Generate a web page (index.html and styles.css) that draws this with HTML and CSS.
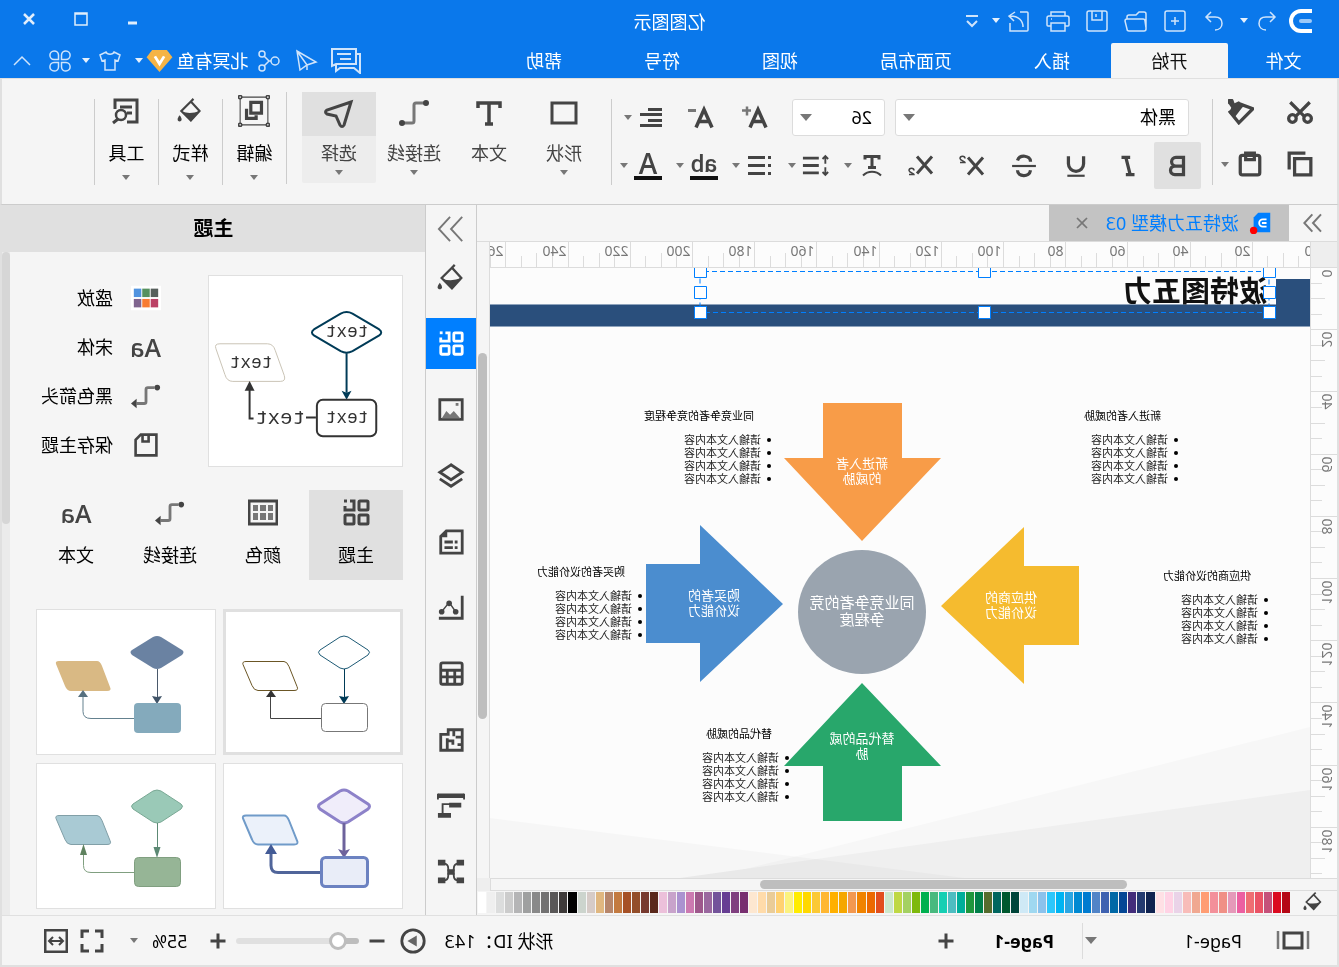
FILE: index.html
```html
<!DOCTYPE html>
<html lang="zh-CN">
<head>
<meta charset="utf-8">
<title>亿图图示</title>
<link rel="stylesheet" href="styles.css">
</head>
<body>
<svg class="sprite" aria-hidden="true">
  <symbol id="i-logo" viewBox="0 0 24 24"><path d="M1 2H12A10 10 0 0 1 12 22H1" stroke="#fff" stroke-width="4"/><path d="M3 12H12" stroke="#9dc9f8" stroke-width="4" stroke-linecap="round"/></symbol>
  <symbol id="i-undo" viewBox="0 0 24 24"><path d="M9 3 4 8l5 5M4 8h9c5 0 7 3 7 6.500s-2.500 6.500-7 6.500"/></symbol>
  <symbol id="i-redo" viewBox="0 0 24 24"><path d="m15 3 5 5-5 5M20 8h-9c-5 0-7 3-7 6.500S6.500 21 11 21"/></symbol>
  <symbol id="i-new" viewBox="0 0 24 24"><rect x="2" y="2" width="20" height="20" rx="2"/><path d="M12 8v8M8 12h8"/></symbol>
  <symbol id="i-open" viewBox="0 0 24 24"><path d="M2 20V5a2 2 0 0 1 2-2h5l3 3h7a2 2 0 0 1 2 2v2M2 19l1-7a2 2 0 0 1 2-2h16a2 2 0 0 1 2 2l-2 8a2 2 0 0 1-2 2H4a2 2 0 0 1-2-2"/></symbol>
  <symbol id="i-save" viewBox="0 0 24 24"><path d="M2 4a2 2 0 0 1 2-2h16a2 2 0 0 1 2 2v16a2 2 0 0 1-2 2H4a2 2 0 0 1-2-2ZM7 2v9h10V2M13 5v3"/></symbol>
  <symbol id="i-print" viewBox="0 0 24 24"><path d="M5 7V3h14v4M5 17H2a1 1 0 0 1-1-1V9a2 2 0 0 1 2-2h18a2 2 0 0 1 2 2v7a1 1 0 0 1-1 1h-3M5 14h14v8H5zM18 10h1"/></symbol>
  <symbol id="i-export" viewBox="0 0 24 24"><path d="M11 3H4a1 1 0 0 0-1 1v17a1 1 0 0 0 1 1h17v-8M8 18c0-6 4-11 13-11M16 3l6 4-5 5"/></symbol>
  <symbol id="i-more" viewBox="0 0 24 24"><path d="M6 7h12M7 12l5 5 5-5" stroke-width="2"/></symbol>
  <symbol id="i-chat" viewBox="0 0 30 26"><path d="M5 1h24v17l-4-2H5ZM5 6H1v19l6-5h14l4 3v-6M10 6h14M10 11h11" stroke-width="2"/></symbol>
  <symbol id="i-send" viewBox="0 0 24 24"><path d="m22 2-3 19-7-5-9-3ZM22 2 12 16v5"/></symbol>
  <symbol id="i-share" viewBox="0 0 24 24"><circle cx="6" cy="12" r="4"/><circle cx="19" cy="5" r="3"/><circle cx="19" cy="19" r="3"/><path d="M10 12h2l5-5M12 12l5 5"/></symbol>
  <symbol id="i-vip" viewBox="0 0 28 26"><path d="M6 1h16l6 8-14 16L0 9Z" fill="#f5b446" stroke="none"/><path d="m9 8 5 8 5-8" stroke="#fff" stroke-width="3"/></symbol>
  <symbol id="i-shirt" viewBox="0 0 24 24"><path d="M8 3 2 6l2 6 3-1v10h10V11l3 1 2-6-6-3c-1 3-7 3-8 0Z"/></symbol>
  <symbol id="i-clover" viewBox="0 0 24 24"><path d="M10.500 10.500V6A4.300 4.300 0 1 0 6 10.500ZM13.500 10.500V6A4.300 4.300 0 1 1 18 10.500ZM10.500 13.500V18A4.300 4.300 0 1 1 6 13.500ZM13.500 13.500V18A4.300 4.300 0 1 0 18 13.500Z"/></symbol>
  <symbol id="i-up" viewBox="0 0 24 24"><path d="m4 16 8-8 8 8"/></symbol>
  <symbol id="i-min" viewBox="0 0 24 24"><path d="M8 16h9" stroke-width="3"/></symbol>
  <symbol id="i-max" viewBox="0 0 24 24"><path d="M6 6h12v12H6zM6 7h12" stroke-width="1.500"/></symbol>
  <symbol id="i-close" viewBox="0 0 24 24"><path d="m6 6 12 12M18 6 6 18"/></symbol>
  <symbol id="i-winclose" viewBox="0 0 24 24"><path d="m7 7 10 10M17 7 7 17" stroke-width="2.500"/></symbol>
  <symbol id="i-cut" viewBox="0 0 24 24"><circle cx="5" cy="18" r="3.500"/><circle cx="19" cy="18" r="3.500"/><path d="M3 3 16 16M21 3 8 16"/></symbol>
  <symbol id="i-copy" viewBox="0 0 24 24"><path d="M2 7h15v15H2z" stroke-width="3"/><path d="M7 2h15v15"/></symbol>
  <symbol id="i-painter" viewBox="0 0 24 24"><path d="M1 9 12 5l10 7-8 10Z"/><path d="m9 6 5-4 4 2 1-3a3 3 0 1 1 4 4l-2 3 2 5-5 4-7-9Z" fill="currentColor" stroke="none"/></symbol>
  <symbol id="i-paste" viewBox="0 0 24 24"><rect x="3" y="4" width="18" height="18" rx="2"/><path d="M8 2h8v6H8z"/></symbol>
  <symbol id="i-bold" viewBox="0 0 24 24"><path d="M6 4h7a4 4 0 0 1 0 8H6Zm0 8h8a4 4 0 0 1 0 8H6Z" stroke-width="3"/></symbol>
  <symbol id="i-italic" viewBox="0 0 24 24"><path d="M10 4h8M6 20h8M14 4l-4 16" stroke-width="3"/></symbol>
  <symbol id="i-under" viewBox="0 0 24 24"><path d="M5 3v7a7 7 0 0 0 14 0V3" stroke-width="3"/><path d="M4 21h16" stroke-width="2"/></symbol>
  <symbol id="i-strike" viewBox="0 0 24 24"><path d="M18 7c-2-6-12-5-12 1M6 16c1 7 12 6 12 0" stroke-width="3"/><path d="M1 12h22" stroke-width="2"/></symbol>
  <symbol id="i-sup" viewBox="0 0 28 24"><path d="m3 4 15 17M18 4 3 21" stroke-width="3"/><path d="M21 5c0-3 5-3 5 0 0 2-5 3-5 4h5" stroke-width="1.500"/></symbol>
  <symbol id="i-sub" viewBox="0 0 28 24"><path d="m2 3 15 17M17 3 2 20" stroke-width="3"/><path d="M20 17c0-3 5-3 5 0 0 2-5 3-5 4h5" stroke-width="1.500"/></symbol>
  <symbol id="i-aplus" viewBox="0 0 28 24"><path d="M3 22 11 4l8 18M5 16h12" stroke-width="3.500"/><path d="M18 5h9M22 1v9" stroke="#777" stroke-width="2.500"/></symbol>
  <symbol id="i-aminus" viewBox="0 0 28 24"><path d="M3 22 11 4l8 18M5 16h12" stroke-width="3.500"/><path d="M19 5h8" stroke="#777" stroke-width="3"/></symbol>
  <symbol id="i-align" viewBox="0 0 28 24"><path d="M4 4h14M4 9h22M4 15h14M4 20h22" stroke-width="3"/></symbol>
  <symbol id="i-textfx" viewBox="0 0 28 24"><path d="M7 6V3h14v3M14 3v11M10 14h8" stroke-width="3"/><path d="M5 22c5-5 13-5 18 0" stroke-width="2"/></symbol>
  <symbol id="i-spacing" viewBox="0 0 30 24"><path d="M5 3v7M2 5l3-3 3 3M5 14v7M2 19l3 3 3-3" stroke-width="2"/><path d="M12 4h17M12 12h17M12 20h17" stroke-width="3"/></symbol>
  <symbol id="i-list" viewBox="0 0 28 24"><path d="M3 4h3M3 12h3M3 20h3M9 4h17M9 12h17M9 20h17" stroke-width="3"/></symbol>
  <symbol id="i-shape" viewBox="0 0 30 30"><path d="M3 5h24v20H3z" stroke-width="3"/></symbol>
  <symbol id="i-text" viewBox="0 0 30 30"><path d="M4 10V5h22v5M15 5v20M11 26h8" stroke-width="3.500"/></symbol>
  <symbol id="i-conn" viewBox="0 0 30 30"><path d="M5 5h8a2 2 0 0 1 2 2v16a2 2 0 0 0 2 2h8" stroke="#777" stroke-width="3"/><circle cx="3" cy="5" r="3" fill="currentColor" stroke="none"/><circle cx="27" cy="25" r="3" fill="currentColor" stroke="none"/></symbol>
  <symbol id="i-select" viewBox="0 0 30 30"><path d="M3 4 27 12q3 2 0 4l-9 2-4 9q-2 3-4 0Z" stroke-width="3"/></symbol>
  <symbol id="i-edit" viewBox="0 0 30 30"><path d="M2 2h26v26H2z" stroke-width="1"/><path d="M8 7h10v10H8z" stroke-width="3"/><path d="M22 13v9H13v-3" stroke-width="3"/><g fill="#f5f5f5" stroke-width="1.500"><circle cx="2" cy="2" r="1.500"/><circle cx="28" cy="2" r="1.500"/><circle cx="2" cy="28" r="1.500"/><circle cx="28" cy="28" r="1.500"/></g></symbol>
  <symbol id="i-fill" viewBox="0 0 30 30"><path d="m14 4 11 11-11 11L4 15Zm0 0-3-3" stroke-width="2.500"/><path d="M4 15q10 4 20 1L14 27Z" fill="currentColor" stroke="none"/><path d="M27 20c4 5 2 7 0 7s-4-2 0-7" fill="currentColor" stroke="none"/></symbol>
  <symbol id="i-tools" viewBox="0 0 30 30"><path d="M14 26H4V4h22v9M9 11h12M9 17h5" stroke-width="3"/><circle cx="20" cy="19" r="5" stroke-width="2.500"/><path d="m23 23 5 4" stroke-width="3"/></symbol>
  <symbol id="i-theme" viewBox="0 0 30 30"><g stroke-width="3"><rect x="3" y="3" width="9" height="9" rx="1"/><rect x="3" y="17" width="9" height="9" rx="1"/><rect x="17" y="17" width="9" height="9" rx="1"/><path d="M21 3h-4v9h9V8"/><path d="M24 3h3"/></g></symbol>
  <symbol id="i-image" viewBox="0 0 30 30"><path d="M3 4h24v21H3z" stroke-width="3"/><path d="m5 24 7-8 4 4 4-4 5 8Z" fill="#777" stroke="none"/><path d="M7 9h3" stroke="#777" stroke-width="3"/></symbol>
  <symbol id="i-layers" viewBox="0 0 30 30"><path d="m15 3 12 8-12 8L3 11Zm-12 15 12 8 12-8" stroke-width="3"/></symbol>
  <symbol id="i-page" viewBox="0 0 30 30"><path d="M3 3h17l6 6v18H3zM8 15h3M13 15h9M8 21h3M13 21h9" stroke-width="3"/><path d="M19 3v7h7Z" fill="currentColor" stroke="none"/></symbol>
  <symbol id="i-chart" viewBox="0 0 30 30"><path d="M3 2v24h25" stroke-width="3"/><path d="m10 19 7-10 8 10" stroke-width="1.500"/><g fill="currentColor" stroke="none"><circle cx="10" cy="19" r="3"/><circle cx="17" cy="10" r="3"/><circle cx="25" cy="19" r="3"/></g></symbol>
  <symbol id="i-table" viewBox="0 0 30 30"><rect x="3" y="3" width="23" height="23" rx="2" stroke-width="3"/><path d="M3 11h23M3 18h23M11 11v15M19 11v15" stroke-width="3"/></symbol>
  <symbol id="i-plan" viewBox="0 0 30 30"><path d="M3 4h15v5h8v17H3zM12 4v7M3 12h7M13 20v-4h6M19 13v13M3 20h5" stroke-width="3"/></symbol>
  <symbol id="i-org" viewBox="0 0 30 30"><path d="M1 4h28M4 14h13M15 25h14" stroke-width="5"/><path d="M1 2v6M29 2v6" stroke-width="2"/><path d="M16 13h8v10" stroke-width="2"/></symbol>
  <symbol id="i-mind" viewBox="0 0 30 30"><path d="M3 6h4q5 0 5 5t3 4q3 1 3-4t5-5h4M3 24h4q5 0 5-5t3-4q3-1 3 4t5 5h4" stroke-width="2"/><path d="M1 5h8M21 5h8M1 24h8M21 24h8M11 15h8" stroke-width="6"/></symbol>
  <symbol id="i-chevrons" viewBox="0 0 30 30"><path d="M3 2 15 15 3 28M16 2l12 13-12 13"/></symbol>
  <symbol id="i-doc" viewBox="0 0 24 26"><path d="M2 2h13l5 5v16H2z" fill="#007fff" stroke="none"/><path d="M6 9h4a4 4 0 0 1 0 8H6M6 13h5" stroke="#fff" stroke-width="2"/><circle cx="20" cy="21" r="4" fill="#f00" stroke="none"/></symbol>
  <symbol id="i-palette" viewBox="0 0 32 26"><path d="M0 0h32v26H0z" fill="#fff" stroke="none"/><g stroke="none"><path d="M3 3h8v9H3z" fill="#565f5b"/><path d="M12 3h8v9h-8z" fill="#56915f"/><path d="M21 3h8v9h-8z" fill="#5093df"/><path d="M3 14h8v9H3z" fill="#bb4165"/><path d="M12 14h8v9h-8z" fill="#f87c33"/><path d="M21 14h8v9h-8z" fill="#80658f"/></g></symbol>
  <symbol id="i-arrowconn" viewBox="0 0 32 26"><path d="M7 4h7a2 2 0 0 1 2 2v13a2 2 0 0 0 2 2h8" stroke="#777" stroke-width="3"/><circle cx="4" cy="4" r="3" fill="currentColor" stroke="none"/><path d="m26 16 6 5-6 5Z" fill="currentColor" stroke="none"/></symbol>
  <symbol id="i-disk" viewBox="0 0 30 30"><path d="M3 3h18l6 6v18H3zM12 3v8h7V3" stroke-width="3"/></symbol>
  <symbol id="i-colors" viewBox="0 0 30 30"><path d="M1 3h28v23H1z" stroke-width="3"/><path d="M5 7h5v6H5zM12 7h6v6h-6zM20 7h5v6h-5zM5 15h5v7H5zM12 15h6v7h-6zM20 15h5v7h-5z" fill="#777" stroke="none"/></symbol>
  <symbol id="i-pages" viewBox="0 0 34 24"><path d="M8 4h18v15H8z" stroke-width="3"/><path d="M2 2v18M32 2v18" stroke="#777" stroke-width="2.500"/></symbol>
  <symbol id="i-plus" viewBox="0 0 24 24"><path d="M2 12h20M12 2v20" stroke-width="4"/></symbol>
  <symbol id="i-minus" viewBox="0 0 24 24"><path d="M2 12h20" stroke-width="4"/></symbol>
  <symbol id="i-play" viewBox="0 0 30 30"><circle cx="15" cy="15" r="12" stroke-width="3"/><path d="m11 9 10 6-10 6Z" fill="#666" stroke="none"/></symbol>
  <symbol id="i-full" viewBox="0 0 24 24"><path d="M2 9V2h7M15 2h7v7M22 15v7h-7M9 22H2v-7" stroke-width="3"/></symbol>
  <symbol id="i-fit" viewBox="0 0 24 24"><path d="M1 1h22v22H1z" stroke-width="3"/><path d="M6 12h12M9 8l-4 4 4 4M15 8l4 4-4 4" stroke-width="2"/></symbol>
</svg>

<div class="app">
  <header class="titlebar">
    <div class="title-row">
      <nav class="quick" aria-label="快速访问">
        <svg class="icon logo"><use href="#i-logo"/></svg>
        <button class="q-btn q-undo" aria-label="撤销"><svg class="icon"><use href="#i-undo"/></svg></button>
        <button class="q-caret q-caret-wide" aria-label="撤销列表"><i class="caret"></i></button>
        <button class="q-btn" aria-label="重做"><svg class="icon"><use href="#i-redo"/></svg></button>
        <button class="q-btn" aria-label="新建"><svg class="icon"><use href="#i-new"/></svg></button>
        <button class="q-btn" aria-label="打开"><svg class="icon"><use href="#i-open"/></svg></button>
        <button class="q-btn" aria-label="保存"><svg class="icon"><use href="#i-save"/></svg></button>
        <button class="q-btn" aria-label="打印"><svg class="icon"><use href="#i-print"/></svg></button>
        <button class="q-btn" aria-label="导出"><svg class="icon"><use href="#i-export"/></svg></button>
        <button class="q-caret" aria-label="导出列表"><i class="caret"></i></button>
        <button class="q-btn" aria-label="更多"><svg class="icon"><use href="#i-more"/></svg></button>
      </nav>
      <h1 class="app-name">亿图图示</h1>
      <div class="window-btns">
        <button aria-label="最小化"><svg class="icon"><use href="#i-min"/></svg></button>
        <button aria-label="最大化"><svg class="icon"><use href="#i-max"/></svg></button>
        <button aria-label="关闭"><svg class="icon"><use href="#i-winclose"/></svg></button>
      </div>
    </div>
    <div class="menu-row">
      <nav class="menu">
        <button class="menu-file">文件</button><button class="active">开始</button><button>插入</button><button>页面布局</button><button>视图</button><button>符号</button><button>帮助</button>
      </nav>
      <div class="account">
        <button aria-label="消息"><svg class="icon chat"><use href="#i-chat"/></svg></button>
        <button aria-label="发送"><svg class="icon"><use href="#i-send"/></svg></button>
        <button aria-label="分享"><svg class="icon"><use href="#i-share"/></svg></button>
        <button class="user">北冥有鱼<svg class="icon vip"><use href="#i-vip"/></svg><i class="caret"></i></button>
        <button class="skin" aria-label="皮肤"><svg class="icon"><use href="#i-shirt"/></svg><i class="caret"></i></button>
        <button class="apps" aria-label="应用"><svg class="icon"><use href="#i-clover"/></svg></button>
        <button aria-label="收起"><svg class="icon"><use href="#i-up"/></svg></button>
      </div>
    </div>
  </header>

  <section class="ribbon" aria-label="开始">
    <div class="clipboard">
      <button aria-label="剪切"><svg class="icon"><use href="#i-cut"/></svg></button>
      <button aria-label="格式刷"><svg class="icon"><use href="#i-painter"/></svg></button>
      <button aria-label="复制"><svg class="icon"><use href="#i-copy"/></svg></button>
      <button aria-label="粘贴"><svg class="icon"><use href="#i-paste"/></svg><i class="caret"></i></button>
    </div>
    <div class="font-group">
      <div class="font-row font-row-top">
        <span class="combo combo-font"><select aria-label="字体"><option>黑体</option></select><i class="caret caret-lg"></i></span>
        <span class="combo combo-size"><select aria-label="字号"><option>26</option></select><i class="caret caret-lg"></i></span>
        <button class="step" aria-label="增大字号"><svg class="icon wide"><use href="#i-aplus"/></svg></button>
        <button class="step" aria-label="减小字号"><svg class="icon wide"><use href="#i-aminus"/></svg></button>
        <button class="split" aria-label="对齐"><svg class="icon"><use href="#i-align"/></svg><i class="caret"></i></button>
      </div>
      <div class="font-row">
        <button class="bold" aria-label="加粗"><svg class="icon"><use href="#i-bold"/></svg></button>
        <button class="fmt" aria-label="斜体"><svg class="icon"><use href="#i-italic"/></svg></button>
        <button class="fmt" aria-label="下划线"><svg class="icon"><use href="#i-under"/></svg></button>
        <button class="fmt" aria-label="删除线"><svg class="icon"><use href="#i-strike"/></svg></button>
        <button class="fmt" aria-label="上标"><svg class="icon wide"><use href="#i-sup"/></svg></button>
        <button class="fmt" aria-label="下标"><svg class="icon wide"><use href="#i-sub"/></svg></button>
        <button class="split" aria-label="文字效果"><svg class="icon"><use href="#i-textfx"/></svg><i class="caret"></i></button>
        <button class="split" aria-label="行距"><svg class="icon"><use href="#i-spacing"/></svg><i class="caret"></i></button>
        <button class="split" aria-label="项目符号"><svg class="icon"><use href="#i-list"/></svg><i class="caret"></i></button>
        <button class="split"><span class="swatch-glyph">ab</span><i class="caret"></i></button>
        <button class="split"><span class="swatch-glyph letter">A</span><i class="caret"></i></button>
      </div>
    </div>
    <div class="insert-group">
      <button class="big"><span class="big-icon"><svg class="icon"><use href="#i-shape"/></svg></span><span class="big-label">形状</span><i class="caret"></i></button>
      <button class="big"><span class="big-icon"><svg class="icon"><use href="#i-text"/></svg></span><span class="big-label">文本</span></button>
      <button class="big"><span class="big-icon"><svg class="icon"><use href="#i-conn"/></svg></span><span class="big-label">连接线</span><i class="caret"></i></button>
      <button class="big selected"><span class="big-icon"><svg class="icon"><use href="#i-select"/></svg></span><span class="big-label">选择</span><i class="caret"></i></button>
    </div>
    <div class="menus-group">
      <button class="big"><span class="big-icon"><svg class="icon large"><use href="#i-edit"/></svg></span><span class="big-label">编辑</span><i class="caret"></i></button>
      <button class="big"><span class="big-icon"><svg class="icon small"><use href="#i-fill"/></svg></span><span class="big-label">样式</span><i class="caret"></i></button>
      <button class="big"><span class="big-icon"><svg class="icon"><use href="#i-tools"/></svg></span><span class="big-label">工具</span><i class="caret"></i></button>
    </div>
  </section>

  <main class="workspace">
    <section class="editor">
      <div class="doc-tabs">
        <button class="expand" aria-label="展开"><svg class="icon"><use href="#i-chevrons"/></svg></button>
        <div class="doc-tab"><svg class="icon doc"><use href="#i-doc"/></svg><span class="doc-name">波特五力模型 03</span><button aria-label="关闭文档"><svg class="icon"><use href="#i-close"/></svg></button></div>
      </div>
      <div class="ruler-corner"></div>
      <svg class="ruler ruler-h" id="ruler-h"></svg>
      <svg class="ruler ruler-v" id="ruler-v"></svg>
      <div class="canvas">
        <svg class="slide" width="820" height="610" viewBox="0 0 820 610">
          <path class="bg1" d="M0 459 600 610H0Z"/><path class="bg2" d="M0 522 630 610H0Z"/><path class="bg3" d="M820 550 345 610H820Z"/>
          <path class="band" d="M0 11h34v25h786v23H0z"/><path class="band-edge" d="M34 36.500h786M0 58.500h820"/>
          <text class="slide-title" x="42" y="34">波特图五力</text>
          <path fill="#f89c48" d="M408 135h79v55h39l-78 83-79-83h39z"/>
          <path fill="#f5bb2f" d="M231 298h55v-39l83 79-83 78v-39h-55z"/>
          <path fill="#4b8dcf" d="M664 296h-54v-39l-83 79 83 78v-39h54z"/>
          <path fill="#28a76b" d="M408 553h79v-55h39l-78-83-79 83h39z"/>
          <ellipse cx="448" cy="344" rx="64" ry="62" fill="#9aa4af"/>
          <g class="shape-text">
            <text x="448" y="200">新进入者</text><text x="448" y="215">的威胁</text>
            <text x="299" y="334">供应商的</text><text x="299" y="349">议价能力</text>
            <text x="596" y="332">购买者的</text><text x="596" y="347">议价能力</text>
            <text x="448" y="475">替代品的威</text><text x="448" y="490">胁</text>
            <text class="core" x="448" y="340">同业竞争者的竞</text><text class="core" x="448" y="357">争程度</text>
          </g>
          <g class="selection">
            <path d="M41 3.500h569v41M41 3.500v41h569" stroke-dasharray="5 3"/>
            <path class="handle" d="M34.500-3.500h12v13h-12zM319.500-3.500h12v13h-12zM603.500-3.500h12v13h-12zM34.500 18.500h12v12h-12zM603.500 18.500h12v12h-12zM34.500 38.500h12v12h-12zM319.500 38.500h12v12h-12zM603.500 38.500h12v12h-12z"/>
          </g>
        </svg>
        <article class="note note-entrant"><h2>新进入者的威胁</h2><ul><li>请输入文本内容</li><li>请输入文本内容</li><li>请输入文本内容</li><li>请输入文本内容</li></ul></article>
        <article class="note note-rival"><h2>同业竞争者的竞争程度</h2><ul><li>请输入文本内容</li><li>请输入文本内容</li><li>请输入文本内容</li><li>请输入文本内容</li></ul></article>
        <article class="note note-supplier"><h2>供应商的议价能力</h2><ul><li>请输入文本内容</li><li>请输入文本内容</li><li>请输入文本内容</li><li>请输入文本内容</li></ul></article>
        <article class="note note-buyer"><h2>购买者的议价能力</h2><ul><li>请输入文本内容</li><li>请输入文本内容</li><li>请输入文本内容</li><li>请输入文本内容</li></ul></article>
        <article class="note note-substitute"><h2>替代品的威胁</h2><ul><li>请输入文本内容</li><li>请输入文本内容</li><li>请输入文本内容</li><li>请输入文本内容</li></ul></article>
      </div>
      <div class="scroll-v"><span></span></div>
      <div class="scroll-h"><span></span></div>
      <div class="scroll-corner"></div>
      <div class="colors"><button aria-label="填充"><svg class="icon"><use href="#i-fill"/></svg></button><div class="swatches" id="swatches"></div></div>
    </section>

    <nav class="side-tools" aria-label="面板">
      <button class="collapse" aria-label="收起面板"><svg class="icon"><use href="#i-chevrons"/></svg></button>
      <button aria-label="填充"><svg class="icon"><use href="#i-fill"/></svg></button>
      <button class="active" aria-label="主题"><svg class="icon"><use href="#i-theme"/></svg></button>
      <button aria-label="图片"><svg class="icon"><use href="#i-image"/></svg></button>
      <button aria-label="图层"><svg class="icon"><use href="#i-layers"/></svg></button>
      <button aria-label="页面"><svg class="icon"><use href="#i-page"/></svg></button>
      <button aria-label="图表"><svg class="icon"><use href="#i-chart"/></svg></button>
      <button aria-label="表格"><svg class="icon"><use href="#i-table"/></svg></button>
      <button aria-label="平面图"><svg class="icon"><use href="#i-plan"/></svg></button>
      <button aria-label="组织结构"><svg class="icon"><use href="#i-org"/></svg></button>
      <button aria-label="思维导图"><svg class="icon"><use href="#i-mind"/></svg></button>
    </nav>

    <aside class="panel">
      <h2 class="panel-title">主题</h2>
      <div class="panel-scroll">
        <div class="panel-body">
          <div class="current">
            <svg class="preview" width="195" height="192" viewBox="0 0 195 192">
              <g fill="none" stroke-width="2">
                <path stroke="#003b57" d="M50 38q6-3 12 0l27 16q4 3 0 6L62 76q-6 3-12 0L23 60q-4-3 0-6Z"/>
                <path stroke="#003b57" d="M56 78v40"/><path fill="#003b57" stroke="none" d="m51 116 5 2 5-2-5 9Z"/>
                <rect x="26" y="125" width="60" height="37" rx="6" stroke="#333"/>
                <path stroke="#c9c3b5" stroke-width="1" d="M136 68.500h48q6 0 4 5l-9 26q-2 7-8 7h-48q-6 0-4-6l9-25q2-7 8-7Z"/>
                <path stroke="#333" d="M87 143h10M150 144h4v-34"/><path fill="#333" stroke="none" d="m149 116 5-10 5 10Z"/>
              </g>
              <g class="preview-text"><text x="34" y="62">text</text><text x="34" y="149">text</text><text x="131" y="93">text</text><text class="link" x="98" y="150">text</text></g>
            </svg>
            <ul class="options">
              <li><button><svg class="icon"><use href="#i-palette"/></svg>盛放</button></li>
              <li><button><span class="aa">Aa</span>宋体</button></li>
              <li><button><svg class="icon"><use href="#i-arrowconn"/></svg>黑色箭头</button></li>
              <li><button><svg class="icon"><use href="#i-disk"/></svg>保存主题</button></li>
            </ul>
          </div>
          <div class="kinds">
            <button class="active"><svg class="icon"><use href="#i-theme"/></svg>主题</button>
            <button><svg class="icon"><use href="#i-colors"/></svg>颜色</button>
            <button><svg class="icon"><use href="#i-arrowconn"/></svg>连接线</button>
            <button><span class="aa">Aa</span>文本</button>
          </div>
          <div class="themes">
            <button class="active" aria-label="主题 1"><svg viewBox="0 0 180 146" fill="none">
              <path stroke="#1d5a75" d="M55 28q4-2 8 0l20 13q3 2 0 5L63 59q-4 2-8 0L35 46q-3-3 0-5Z"/><path stroke="#003b57" d="M58.500 60v28"/><path fill="#003b57" d="m54 87 5 1 5-1-5 8Z"/>
              <rect x="35.500" y="94.500" width="46" height="28" rx="4" stroke="#777"/><path stroke="#6b5625" d="M119 52.500h38q4 0 3 3l-9 21q-2 5-6 5h-36q-5 0-3-4l8-20q2-5 5-5Z"/>
              <path stroke="#444" d="M82 109.500h50.500V86"/><path fill="#333" d="m127 88 5-7 5 7Z"/></svg></button>
            <button aria-label="主题 2"><svg viewBox="0 0 180 146" fill="none">
              <path fill="#6a82a2" d="M55 28q4-2 8 0l21 13q3 2 0 5L63 59q-4 2-8 0L34 46q-3-3 0-5Z"/><path stroke="#4a596b" d="M58.500 60v28"/><path fill="#405468" d="m54 87 5 1 5-1-5 8Z"/>
              <rect x="35" y="94" width="47" height="30" rx="4" fill="#84aabc"/><path fill="#d9b984" d="M119 52h38q4 0 3 3l-9 22q-2 5-6 5h-36q-5 0-3-4l8-21q2-5 5-5Z"/>
              <path stroke="#64818f" d="M82 109.500h43q8 0 8-7V86"/><path fill="#56707f" d="m128 88 5-7 5 7Z"/></svg></button>
            <button aria-label="主题 3"><svg viewBox="0 0 180 146" fill="none">
              <path fill="#f0edfa" stroke="#8d82c9" stroke-width="3" d="M55 28q4-2 8 0l20 13q3 2 0 5L63 59q-4 2-8 0L35 46q-3-3 0-5Z"/><path stroke="#6d629c" stroke-width="3" d="M59 60v28"/><path fill="#6d629c" d="m53 86 6 2 6-2-6 9Z"/>
              <rect x="35.500" y="94.500" width="46" height="29" rx="4" fill="#e9edf8" stroke="#6c82c1" stroke-width="3"/><path fill="#ebf1fa" stroke="#709bc9" stroke-width="2" d="M119 52.500h38q4 0 3 3l-9 21q-2 5-6 5h-36q-5 0-3-4l8-20q2-5 5-5Z"/>
              <path stroke="#50659a" stroke-width="3" d="M83 109.500h42q7 0 7-7V88"/><path fill="#435b96" d="m126 91 6-10 6 10Z"/></svg></button>
            <button aria-label="主题 4"><svg viewBox="0 0 180 146" fill="none">
              <path fill="#9ac9b7" stroke="#79a894" d="M55 28q4-2 8 0l20 13q3 2 0 5L63 59q-4 2-8 0L35 46q-3-3 0-5Z"/><path stroke="#5c8974" d="M58.500 60v28"/><path fill="#5c8974" d="M55.500 84h7L59 95Z"/>
              <rect x="35.500" y="94.500" width="46" height="29" rx="4" fill="#96b596" stroke="#809f80"/><path fill="#a9cad4" stroke="#819fa7" d="M119 52.500h38q4 0 3 3l-9 21q-2 5-6 5h-36q-5 0-3-4l8-20q2-5 5-5Z"/>
              <path stroke="#809f80" d="M82 109.500h43q7.500 0 7.500-7V86"/><path fill="#5f825f" d="M129 92h7l-3.500-11Z"/></svg></button>
          </div>
        </div>
        <div class="panel-bar"><span></span></div>
      </div>
    </aside>
  </main>

  <footer class="status">
    <button class="pages-btn" aria-label="页面视图"><svg class="icon"><use href="#i-pages"/></svg></button>
    <button class="page-pick">Page-1<i class="caret caret-lg"></i></button>
    <button class="page-tab">Page-1</button>
    <button class="page-add" aria-label="新建页面"><svg class="icon"><use href="#i-plus"/></svg></button>
    <span class="shape-id">形状 ID：143</span>
    <button class="play" aria-label="播放"><svg class="icon"><use href="#i-play"/></svg></button>
    <button class="zoom-btn" aria-label="缩小"><svg class="icon"><use href="#i-minus"/></svg></button>
    <input class="zoom" type="range" min="0" max="100" value="11" aria-label="缩放">
    <button class="zoom-btn" aria-label="放大"><svg class="icon"><use href="#i-plus"/></svg></button>
    <button class="zoom-value">55%<i class="caret"></i></button>
    <button class="view-btn" aria-label="全屏"><svg class="icon"><use href="#i-full"/></svg></button>
    <button class="view-btn" aria-label="适合宽度"><svg class="icon"><use href="#i-fit"/></svg></button>
  </footer>
</div>
<script src="app.js"></script>
</body>
</html>
```
FILE: styles.css
```css
* { box-sizing: border-box; }
body {
  margin: 0;
  font-family: "Noto Sans", "Noto Sans CJK SC", sans-serif;
  font-size: 18px;
  line-height: 24px;
  color: #111;
  background: #f5f5f5;
}
h1, h2, ul { margin: 0; padding: 0; }
ul { list-style: none; }
button {
  display: flex;
  align-items: center;
  justify-content: center;
  margin: 0;
  padding: 0;
  border: 0;
  background: none;
  color: inherit;
  font: inherit;
  white-space: nowrap;
}
.sprite { position: absolute; width: 0; height: 0; }
.icon {
  flex: none;
  width: 24px;
  height: 24px;
  fill: none;
  stroke: currentColor;
  stroke-width: 2;
}
.caret {
  flex: none;
  border: 4px solid transparent;
  border-top: 5px solid #777;
  border-bottom: 0;
}
.caret-lg { border-width: 7px 6px 0; }

/* The whole window is shown as a horizontal mirror image. */
.app {
  display: grid;
  grid-template-rows: auto auto minmax(0, 1fr) auto;
  height: 100vh;
  min-height: 700px;
  transform: scaleX(-1);
}

/* title bar */
.titlebar { background: #0a78eb; color: #cfe4fb; }
.titlebar .icon { stroke-width: 1.5; }
.titlebar .caret { border-top-color: #e6f1fd; }
.title-row {
  display: grid;
  grid-template-columns: 1fr auto 1fr;
  align-items: center;
  height: 43px;
}
.quick { display: flex; padding: 0 0 2px 26px; }
.q-btn { width: 39px; height: 24px; }
.q-undo { width: 36px; margin-left: 4px; }
.q-caret { width: 8px; }
.q-caret-wide { width: 9px; margin-right: 6px; }
.app-name { font-size: 18px; font-weight: 400; line-height: 24px; color: #fff; }
.window-btns { display: flex; justify-content: flex-end; padding: 0 3px 6px 0; }
.window-btns button { width: 52px; height: 24px; color: #e1eefc; }
.menu-row { display: flex; justify-content: space-between; height: 35px; }
.menu { display: flex; color: #fff; }
.menu button { padding: 0 41px; }
.menu .menu-file { width: 111px; padding: 0; }
.menu .active { width: 117px; padding: 0; background: #f5f5f5; color: #111; border-radius: 2px 2px 0 0; }
.account { display: flex; align-items: center; padding-right: 3px; }
.account button { width: 38px; }
.account button:first-child { width: 40px; }
.account .chat { width: 30px; height: 26px; }
.account .user { width: 116px; gap: 3px; color: #fff; }
.account .user .icon { width: 27px; }
.account .skin { width: 54px; gap: 8px; padding-left: 10px; }
.account .apps { margin-left: 1px; }

/* ribbon */
.ribbon {
  display: flex;
  align-items: flex-start;
  height: 127px;
  padding-top: 13px;
  border: solid #e0e0e0;
  border-width: 1px 2px;
  border-bottom-color: #ccc;
  background: #f5f5f5;
  color: #444;
}
.clipboard, .font-group, .insert-group, .menus-group .big { border-right: 1px solid #ccc; }
.clipboard {
  display: grid;
  grid-template: 37px 42px / 34px 62px;
  align-items: center;
  gap: 7px 0;
  width: 125px;
  margin-top: 7px;
  padding-left: 20px;
}
.clipboard button { gap: 8px; }
.clipboard button:nth-child(even) { justify-content: flex-end; }
.clipboard button:nth-child(2) { padding-right: 7px; }
.clipboard button:nth-child(-n+2) { align-self: start; }
.clipboard .icon { width: 26px; height: 26px; stroke-width: 3; }
.font-group { width: 601px; height: 86px; margin-top: 7px; padding-left: 11px; }
.font-row { display: flex; align-items: center; height: 47px; }
.font-row-top { height: 36px; margin-bottom: 7px; padding-left: 12px; }
.combo { position: relative; margin-right: 10px; }
.combo-font { width: 294px; }
.combo-size { width: 93px; }
.combo select {
  display: block;
  width: 100%;
  height: 37px;
  padding: 0 12px;
  border: 1px solid #dcdcdc;
  border-radius: 3px;
  appearance: none;
  background: #fff;
  color: #000;
  font: inherit;
}
.combo .caret { position: absolute; right: 8px; top: 15px; pointer-events: none; }
.step { width: 54px; }
.bold { width: 47px; height: 47px; border-radius: 2px; background: #e0e0e0; }
.fmt { width: 52px; height: 47px; }
.font-row .icon { width: 26px; height: 26px; }
.font-row .icon.wide, .font-row .split .icon { width: 28px; height: 25px; }
.split { width: 56px; height: 42px; gap: 6px; padding-left: 2px; }
.swatch-glyph {
  width: 28px;
  height: 29px;
  border-bottom: 4px solid #111;
  font-family: Roboto, sans-serif;
  font-size: 24px;
  font-weight: 500;
  line-height: 27px;
}
.swatch-glyph.letter { font-family: "Open Sans", sans-serif; font-size: 28px; line-height: 24px; font-weight: 600; }
.insert-group { display: flex; gap: 1px; height: 92px; padding: 0 15px 0 10px; }
.insert-group, .clipboard, .font-group { border-image: linear-gradient(#ccc, #ccc) 1; }
.menus-group { display: flex; }
.big { flex-direction: column; justify-content: flex-start; width: 74px; height: 91px; }
.big-icon { display: flex; flex: none; align-items: center; justify-content: center; width: 100%; height: 44px; padding-bottom: 2px; }
.big-label { height: 34px; line-height: 34px; }
.big .icon { width: 30px; height: 30px; }
.big .icon.small { width: 26px; height: 26px; }
.big .icon.large { width: 32px; height: 32px; }
.big.selected { background: #ededed; border-radius: 2px; }
.big.selected .big-icon { background: #e0e0e0; }
.menus-group .big { width: 64px; height: 86px; margin-top: 7px; }
.menus-group .big-icon { height: 35px; padding-bottom: 12px; }
.menus-group .big-label { height: 41px; line-height: 39px; color: #000; }

/* workspace */
.workspace {
  display: grid;
  grid-template-columns: minmax(0, 1fr) 52px 423px;
  min-height: 0;
  border: solid #e0e0e0;
  border-width: 0 2px;
}
.editor {
  display: grid;
  grid-template: 37px 26px minmax(0, 1fr) 13px 24px / 27px minmax(0, 1fr) 13px;
  min-height: 0;
}
.doc-tabs { grid-column: 1 / -1; display: flex; border-bottom: 1px solid #dcdcdc; }
.expand { width: 48px; color: #777; }
.expand .icon { width: 20px; height: 20px; stroke-width: 3; }
.doc-tab {
  display: flex;
  align-items: center;
  width: 240px;
  padding-left: 16px;
  background: #c3c3c3;
  color: #007fff;
}
.doc-name { flex: 1; margin-left: 10px; }
.doc-tab button { width: 24px; margin-right: 21px; color: #777; }
.doc-tab button .icon { width: 20px; height: 20px; }
.ruler-corner { background: #eee; border: solid #dcdcdc; border-width: 0 1px 1px 0; }
.ruler { display: block; width: 100%; height: 100%; background: #fcfcfc; overflow: hidden; }
.ruler-h { grid-column: 2 / 3; border-bottom: 1px solid #dcdcdc; }
.ruler-v { grid-column: 1 / 2; border-right: 1px solid #dcdcdc; }
.ruler path { stroke: #dcdcdc; }
.ruler text { fill: #777; font-size: 14px; }
.canvas { position: relative; overflow: hidden; background: #fcfcfc; }
.slide { display: block; }
.bg1 { fill: #f7f7f7; }
.bg2 { fill: #efefef; }
.bg3 { fill: #000; fill-opacity: 0.025; }
.band { fill: #2a4f7c; }
.band-edge { stroke: #8ea3bc; }
.slide-title { font-size: 29px; font-weight: 700; fill: #111; }
.shape-text { fill: #fff; font-size: 13px; text-anchor: middle; }
.shape-text .core { font-size: 15px; }
.selection { fill: none; stroke: #007fff; }
.selection .handle { fill: #fff; }
.note { position: absolute; color: #222; font-size: 11px; line-height: 13px; white-space: nowrap; }
.note h2 { margin: 0 0 11px 17px; font-size: 11px; font-weight: 400; line-height: 13px; color: #000; }
.note li { display: flex; align-items: center; gap: 6px; }
.note li::before { content: ""; width: 4px; height: 4px; border-radius: 50%; background: #000; }
.note-entrant { left: 132px; top: 141px; }
.note-rival { left: 539px; top: 141px; }
.note-supplier { left: 42px; top: 301px; }
.note-buyer { left: 668px; top: 297px; }
.note-substitute { left: 521px; top: 459px; }
.scroll-v { grid-column: 3; grid-row: 2 / 4; padding: 111px 1px 0 2px; border-left: 1px solid #dcdcdc; }
.scroll-v span { display: block; height: 366px; border-radius: 5px; background: #bebebe; }
.scroll-h { grid-column: 1 / 3; padding: 1px 0 0 210px; border: 1px solid #dcdcdc; border-left: 0; }
.scroll-h span { display: block; width: 367px; height: 9px; border-radius: 5px; background: #bebebe; }
.scroll-corner { background: #eee; }
.colors { grid-column: 1 / -1; display: flex; align-items: center; padding: 0 1px 2px 0; }
.colors button { width: 47px; }
.colors .icon { color: #444; width: 20px; height: 20px; }
.swatches { flex: 1; display: flex; gap: 1px; height: 21px; }
.swatches span { flex: 1; }

/* side tools */
.side-tools {
  display: flex;
  flex-direction: column;
  gap: 15px;
  overflow: hidden;
  border: solid #ccc;
  border-width: 0 1px;
  color: #444;
}
.side-tools button { flex: none; height: 51px; }
.side-tools .collapse { height: 47px; margin-bottom: -15px; color: #777; }
.side-tools .icon { width: 28px; height: 28px; }
.side-tools .active { background: #007fff; color: #fff; }

/* theme panel */
.panel { display: flex; flex-direction: column; min-height: 0; }
.panel-title { flex: none; height: 47px; background: #e0e0e0; color: #000; font-size: 20px; line-height: 48px; text-align: center; }
.panel-scroll { flex: 1; display: flex; min-height: 0; overflow: hidden; }
.panel-body { flex: 1; padding: 23px 0 0 22px; }
.panel-bar { flex: none; width: 8px; background: #ebebeb; }
.panel-bar span { display: block; height: 272px; border-radius: 4px; background: #d6d6d6; }
.current { display: flex; gap: 47px; height: 192px; }
.preview { flex: none; border: 1px solid #e0e0e0; background: #fff; }
.preview-text { fill: #333; font-family: "Liberation Mono", monospace; font-size: 18px; }
.preview-text .link { font-size: 21px; }
.options li { height: 49px; }
.options button { height: 46px; gap: 18px; color: #000; }
.options .icon { width: 30px; height: 26px; color: #444; }
.aa { width: 32px; color: #444; font-size: 25px; font-weight: 600; line-height: 30px; font-family: "Open Sans", sans-serif; }
.options .aa { width: 30px; }
.kinds { display: grid; grid-template-columns: 94px 92px 94px 94px; margin-top: 23px; }
.kinds button { flex-direction: column; justify-content: flex-start; gap: 15px; height: 90px; padding-top: 8px; color: #000; }
.kinds .icon { width: 30px; height: 30px; color: #444; }
.kinds .active { background: #e0e0e0; }
.themes { display: grid; grid-template-columns: 180px 180px; gap: 8px 7px; margin-top: 29px; }
.themes button { background: #fff; box-shadow: inset 0 0 0 1px #e0e0e0; }
.themes .active { box-shadow: inset 0 0 0 3px #e0e0e0; }
.themes svg { display: block; width: 180px; height: 146px; }

/* status bar */
.status {
  display: flex;
  align-items: center;
  height: 52px;
  padding: 0 42px 0 27px;
  border: solid #e0e0e0;
  border-width: 1px 2px 2px;
  color: #444;
}
.pages-btn .icon { width: 34px; }
.page-pick { justify-content: space-between; width: 160px; height: 36px; margin-left: 34px; padding-right: 2px; color: #000; border-right: 1px solid #dcdcdc; }
.page-tab { margin-left: 28px; color: #000; font-weight: 700; }
.page-add { margin-left: 39px; }
.page-add .icon, .zoom-btn .icon { width: 18px; height: 18px; }
.shape-id { margin-left: auto; color: #000; }
.play { margin-left: 18px; }
.play .icon { width: 28px; height: 28px; }
.zoom-btn { width: 18px; margin: 0 9px 0 13px; }
.zoom {
  width: 123px;
  height: 18px;
  margin: 0;
  appearance: none;
  background: none;
}
.zoom::-webkit-slider-runnable-track {
  height: 6px;
  border-radius: 3px;
  background: linear-gradient(90deg, #bdbdbd 20px, #e0e0e0 20px);
}
.zoom::-webkit-slider-thumb {
  width: 18px;
  height: 18px;
  margin-top: -6px;
  appearance: none;
  border: 3px solid #bdbdbd;
  border-radius: 50%;
  background: #fff;
}
.zoom + .zoom-btn { margin: 0 21px 0 9px; }
.zoom-value { gap: 14px; color: #000; }
.view-btn { margin-left: 26px; }
.view-btn + .view-btn { margin-left: 12px; }
```
FILE: app.js
```javascript
const palette = [
  "#b50715", "#db0a20", "#c5517a", "#ea5365", "#ef6e73", "#ec5fa1", "#e599b9", "#f09086", "#f3909a", "#ff9d73",
  "#f0a891", "#f8bcb9", "#ead3e8", "#ffd3e5", "#ffe0e5", "#0f2350", "#233a70", "#432d7b", "#054795", "#0068a6",
  "#3e61b0", "#5184c7", "#007bd0", "#0089d2", "#2ba6e3", "#00b4f2", "#2dc7fb", "#8bc2ec", "#9fd8f0", "#cfe9f6",
  "#00453a", "#00582f", "#00665f", "#566c2e", "#007f49", "#1f963d", "#00ae9a", "#4ebdc1", "#16cfb3", "#48b97f",
  "#00b050", "#7eb90d", "#a4d162", "#bfd844", "#cce8cb", "#e24e1d", "#ec6900", "#f08300", "#f3984f", "#f5a700",
  "#ffb000", "#ffb732", "#fbc935", "#ffd800", "#ffec00", "#fbf27f", "#ffd171", "#eacc97", "#ffdbaa", "#fde7d0",
  "#782f70", "#80407f", "#673e93", "#73539a", "#9a689f", "#9e588c", "#cc7ab1", "#ab92d0", "#c8a3cb", "#ecc0da",
  "#5a281b", "#773a2f", "#934e2a", "#a65126", "#c37a40", "#b7866b", "#e0b780", "#d6cbc7", "#ccd4cd", "#000000",
  "#3e3a39", "#595757", "#727171", "#898989", "#9fa0a0", "#b5b5b6", "#cccccc", "#dcdddd", "#efefef", "#ffffff"
];
document.getElementById("swatches").innerHTML =
  palette.map(color => `<span style="background:${color}"></span>`).join("");

const STEP = 62.2;

function drawRuler(svg, origin, last, vertical) {
  let lines = "";
  let labels = "";
  for (let i = 0; i * 5 <= last; i++) {
    const p = Math.round(origin + i * STEP / 4) + 0.5;
    const length = i % 4 === 0 ? 26 : i % 2 === 0 ? 14 : 11;
    lines += vertical ? `M26 ${p}h-${length}` : `M${p} 25v-${length}`;
    if (i % 4 === 0) {
      labels += vertical
        ? `<text transform="translate(15 ${p + 2}) rotate(-90)" text-anchor="end">${i * 5}</text>`
        : `<text x="${p + 2}" y="14">${i * 5}</text>`;
    }
  }
  svg.innerHTML = `<path d="${lines}"/>${labels}`;
}
drawRuler(document.getElementById("ruler-h"), -5, 265, false);
drawRuler(document.getElementById("ruler-v"), -1, 195, true);
```
